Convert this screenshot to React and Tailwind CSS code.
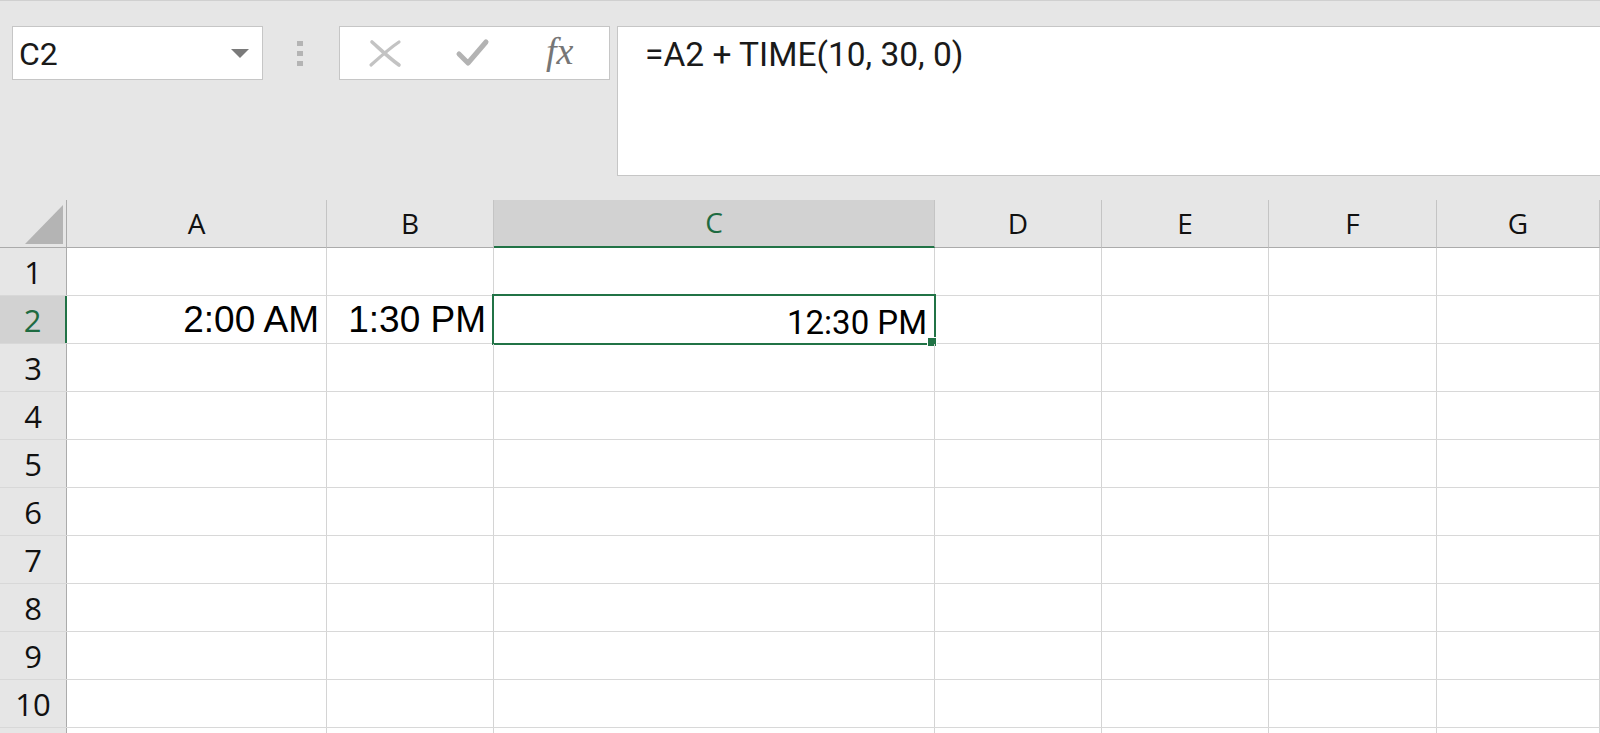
import React from "react";

const HEAD = { fontFamily: '"Open Sans", "Noto Sans", sans-serif' };
const ROB = { fontFamily: 'Roboto, "Open Sans", sans-serif' };
const ARIAL = { fontFamily: '"Liberation Sans", Arial, sans-serif' };

const colClasses = [
  "w-[260px]",
  "w-[167px]",
  "w-[441px]",
  "w-[167px]",
  "w-[167px]",
  "w-[168px]",
  "flex-1",
];
const letters = ["A", "B", "C", "D", "E", "F", "G"];

function XIcon() {
  return (
    <svg width="34" height="30" viewBox="0 0 34 30" className="block">
      <path d="M4 4 C 12 11, 20 19, 31 27" stroke="#c3c3c3" strokeWidth="3.6" fill="none" strokeLinecap="round" />
      <path d="M31 4 C 22 10, 13 18, 3 27" stroke="#c3c3c3" strokeWidth="3.2" fill="none" strokeLinecap="round" />
    </svg>
  );
}

function CheckIcon() {
  return (
    <svg width="36" height="30" viewBox="0 0 36 30" className="block">
      <path d="M4 16 L 13 25 L 31 4" stroke="#b3b3b3" strokeWidth="5" fill="none" strokeLinecap="round" strokeLinejoin="round" />
    </svg>
  );
}

function Cell({ w, children, selected }) {
  return (
    <div className={`${w} relative h-full shrink-0 border-r border-[#d4d4d4] flex items-end justify-end pr-[7px]`}>
      {children}
      {selected && (
        <>
          <div className="absolute -left-[2px] -top-[2px] -right-[2px] -bottom-[2px] border-[2px] border-[#217346] pointer-events-none" />
          <div className="absolute -right-[3px] -bottom-[4px] w-[10px] h-[10px] bg-[#217346] border border-white" />
        </>
      )}
    </div>
  );
}

export default function App() {
  const rows = Array.from({ length: 11 }, (_, i) => i + 1);
  return (
    <div className="w-[1600px] h-[733px] overflow-hidden bg-white flex flex-col">
      {/* Formula bar area */}
      <div className="h-[200px] shrink-0 bg-[#e6e6e6] border-t border-[#d0d0d0] flex items-start pt-[25px] pl-[12px]">
        <div className="w-[251px] h-[54px] bg-white border border-[#c6c6c6] flex items-center justify-between pl-[6px] pr-[13px]">
          <span className="text-[32px] text-[#1a1a1a] leading-none mt-[2px]" style={ROB}>C2</span>
          <svg width="18" height="9" viewBox="0 0 18 9" className="block">
            <polygon points="0,0 18,0 9,9" fill="#7a7a7a" />
          </svg>
        </div>
        <div className="w-[76px] h-[54px] flex flex-col items-center justify-center gap-[5px] pr-[3px]">
          <div className="w-[6px] h-[5px] bg-[#b4b4b4]" />
          <div className="w-[6px] h-[5px] bg-[#b4b4b4]" />
          <div className="w-[6px] h-[5px] bg-[#b4b4b4]" />
        </div>
        <div className="w-[271px] h-[54px] bg-white border border-[#c6c6c6] flex items-center pl-[28px]">
          <XIcon />
          <div className="ml-[53px]">
            <CheckIcon />
          </div>
          <span
            className="ml-[55px] text-[38px] italic text-[#767676] leading-none -mt-[4px]"
            style={{ fontFamily: '"Liberation Serif", "DejaVu Serif", serif' }}
          >
            fx
          </span>
        </div>
        <div className="ml-[7px] flex-1 h-[150px] bg-white border border-r-0 border-[#c6c6c6] pl-[27px] pt-[8px]">
          <div className="text-[33.5px] leading-[40px] text-[#1a1a1a]" style={ROB}>
            =A2 + TIME(10, 30, 0)
          </div>
        </div>
      </div>

      {/* Column headers */}
      <div className="h-[48px] shrink-0 flex bg-[#e6e6e6]">
        <div className="w-[67px] shrink-0 h-full border-r border-b border-[#ababab] relative">
          <svg width="67" height="47" viewBox="0 0 67 47" className="absolute left-0 top-0">
            <polygon points="63,5 63,44 25,44" fill="#b4b4b4" />
          </svg>
        </div>
        {letters.map((l, i) => {
          const sel = l === "C";
          return (
            <div
              key={l}
              className={`${colClasses[i]} shrink-0 h-full border-r border-[#c4c4c4] flex items-center justify-center text-[28px] ${
                sel ? "bg-[#d2d2d2] border-b-2 border-b-[#217346] text-[#1e6b41]" : "border-b border-b-[#ababab] text-[#111]"
              }`}
              style={HEAD}
            >
              <span className="-mt-[2px]">{l}</span>
            </div>
          );
        })}
      </div>

      {/* Rows */}
      {rows.map((r) => {
        const selRow = r === 2;
        return (
          <div key={r} className="h-[48px] shrink-0 flex border-b border-[#d8d8d8]">
            <div
              className={`w-[67px] shrink-0 h-full flex items-center justify-center text-[31px] ${
                selRow
                  ? "bg-[#d2d2d2] border-r-2 border-[#217346] text-[#1e6b41]"
                  : "bg-[#e6e6e6] border-r border-[#ababab] text-[#111]"
              }`}
              style={HEAD}
            >
              {r <= 10 && <span className="mt-[1px]">{r}</span>}
            </div>
            {letters.map((l, i) => {
              let content = null;
              if (r === 2 && l === "A")
                content = (
                  <span className="text-[37px] leading-[47px] text-black" style={ARIAL}>
                    2:00 AM
                  </span>
                );
              if (r === 2 && l === "B")
                content = (
                  <span className="text-[37px] leading-[47px] text-black" style={ARIAL}>
                    1:30 PM
                  </span>
                );
              if (r === 2 && l === "C")
                content = (
                  <span className="text-[33px] leading-[47px] text-black translate-y-[3px]" style={ROB}>
                    12:30 PM
                  </span>
                );
              return (
                <Cell key={l} w={colClasses[i]} selected={r === 2 && l === "C"}>
                  {content}
                </Cell>
              );
            })}
          </div>
        );
      })}
    </div>
  );
}
